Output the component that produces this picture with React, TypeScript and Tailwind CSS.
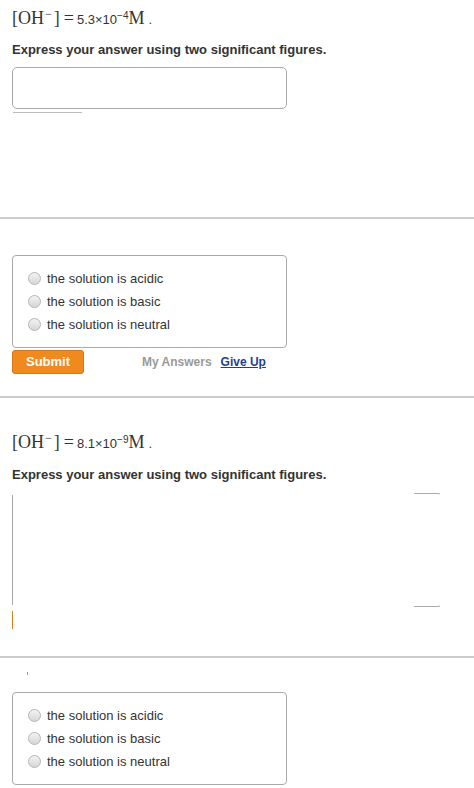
import React from "react";

const serif = { fontFamily: '"Liberation Serif", "Times New Roman", serif' } as const;

function Formula({ val, exp }: { val: string; exp: string }) {
  return (
    <div className="flex items-baseline text-[#333] h-[20px] leading-[20px]">
      <span className="text-[18px]" style={serif}>[OH</span>
      <span className="text-[12px] relative -top-[6px] ml-[1px]" style={serif}>−</span>
      <span className="text-[18px] ml-[2px]" style={serif}>]</span>
      <span className="text-[18px] ml-[4px] mr-[3px]" style={serif}>=</span>
      <span className="text-[13px]">{val}×10</span>
      <span className="text-[10px] relative -top-[5px]">{exp}</span>
      <span className="text-[18px]" style={serif}>M</span>
      <span className="text-[13px] ml-[4px]">.</span>
    </div>
  );
}

function Radio({ label }: { label: string }) {
  return (
    <div className="flex items-center h-[23px]">
      <span className="w-[13px] h-[13px] rounded-full border border-[#b5b5b5] bg-gradient-to-b from-[#f3f3f3] to-[#d6d6d6] mr-[6px]" />
      <span className="text-[13px] text-[#333]">{label}</span>
    </div>
  );
}

function RadioBox() {
  return (
    <div className="w-[275px] h-[93px] border border-[#aaa] rounded-[4px] pl-[15px] pt-[11px] bg-white">
      <Radio label="the solution is acidic" />
      <Radio label="the solution is basic" />
      <Radio label="the solution is neutral" />
    </div>
  );
}

export default function App() {
  return (
    <div className="w-[474px] h-[788px] bg-white overflow-hidden" style={{ fontFamily: '"Liberation Sans", Arial, sans-serif' }}>
      <div className="px-[12px] pt-[8px]">
        <Formula val="5.3" exp="−4" />
        <div className="mt-[14px] text-[13px] font-bold text-[#333] leading-[16px]">Express your answer using two significant figures.</div>
        <div className="mt-[9px] w-[275px] h-[42px] border border-[#aaa] rounded-[5px]" />
        <div className="mt-[3px] ml-[1px] w-[69px] h-[1px] bg-[#bbb]" />
      </div>
      <div className="mt-[104px] h-[2px] bg-[#cccccc]" />
      <div className="px-[12px] pt-[36px]">
        <RadioBox />
        <div className="flex items-center mt-[2px]">
          <button className="w-[72px] h-[24px] rounded-[3px] bg-[#f0891e] border border-[#d7761a] text-white font-bold text-[13px] leading-[22px]">Submit</button>
          <span className="ml-[58px] text-[12px] font-bold text-[#999]">My Answers</span>
          <span className="ml-[9px] text-[12px] font-bold text-[#1f3f8f] underline">Give Up</span>
        </div>
      </div>
      <div className="mt-[22px] h-[2px] bg-[#cccccc]" />
      <div className="px-[12px] pt-[34px]">
        <Formula val="8.1" exp="−9" />
        <div className="mt-[15px] text-[13px] font-bold text-[#333] leading-[16px]">Express your answer using two significant figures.</div>
        <div className="relative h-[138px] mt-[3px]">
          <div className="absolute left-0 top-[9px] w-[1px] h-[110px] bg-[#aaa]" />
          <div className="absolute left-0 top-[125px] w-[1px] h-[18px] bg-[#d87a1f]" />
          <div className="absolute left-[402px] top-[7px] w-[27px] h-[114px] border-t border-b border-r border-[#aaa] rounded-r-[3px]" style={{ borderRightColor: "transparent" }} />
        </div>
      </div>
      <div className="mt-[32px] h-[2px] bg-[#cccccc]" />
      <div className="px-[12px]">
        <div className="ml-[15px] mt-[14px] w-[1px] h-[3px] bg-[#6aa0e0]" />
        <div className="mt-[17px]">
          <RadioBox />
        </div>
      </div>
    </div>
  );
}
